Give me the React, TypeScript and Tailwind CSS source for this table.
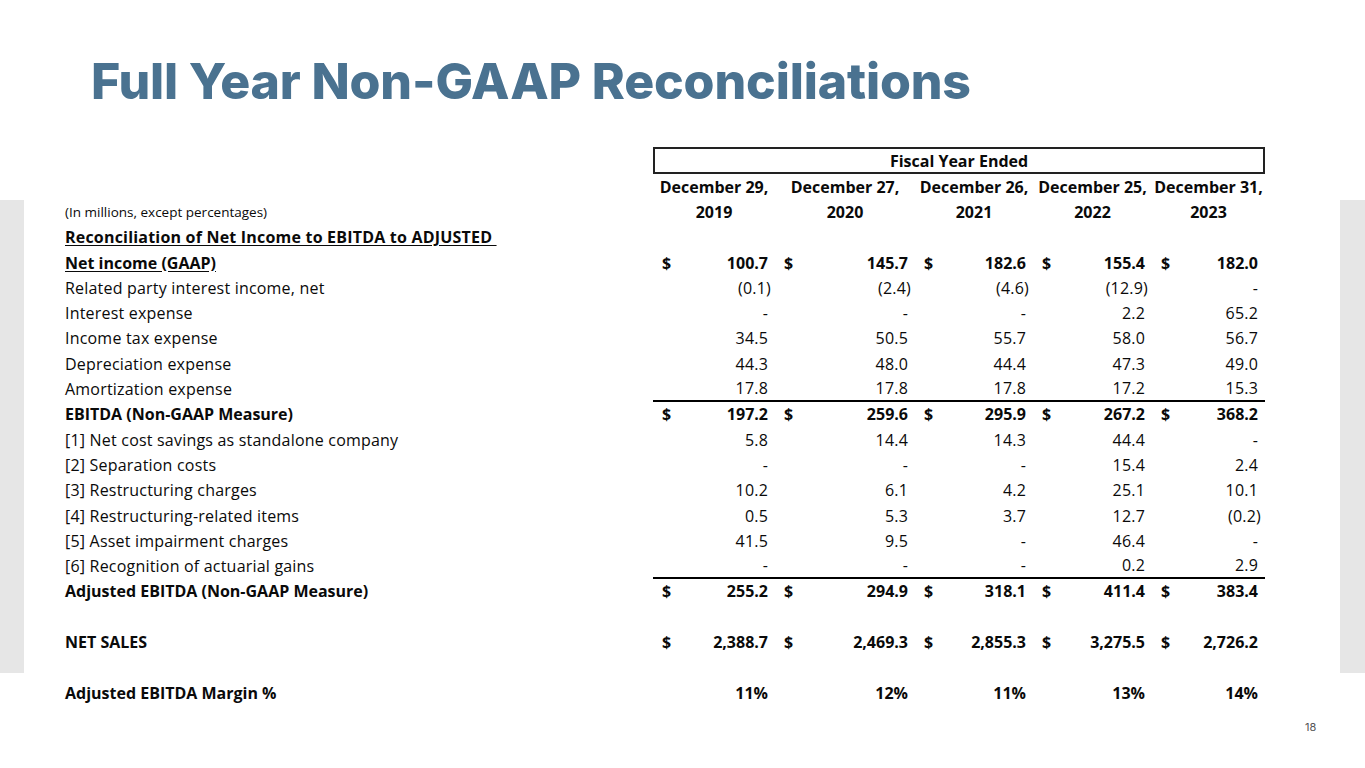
import React from "react";

type Row = {
  label?: string;
  vals?: string[];
  bold?: boolean;
  underline?: boolean;
  dollar?: boolean;
  lineBelow?: boolean;
  spacer?: boolean;
};

const cols = [
  { top: "December 29,", year: "2019" },
  { top: "December 27,", year: "2020" },
  { top: "December 26,", year: "2021" },
  { top: "December 25,", year: "2022" },
  { top: "December 31,", year: "2023" },
];

const rows: Row[] = [
  { label: "Net income (GAAP)", bold: true, underline: true, dollar: true, vals: ["100.7", "145.7", "182.6", "155.4", "182.0"] },
  { label: "Related party interest income, net", vals: ["(0.1)", "(2.4)", "(4.6)", "(12.9)", "-"] },
  { label: "Interest expense", vals: ["-", "-", "-", "2.2", "65.2"] },
  { label: "Income tax expense", vals: ["34.5", "50.5", "55.7", "58.0", "56.7"] },
  { label: "Depreciation expense", vals: ["44.3", "48.0", "44.4", "47.3", "49.0"] },
  { label: "Amortization expense", vals: ["17.8", "17.8", "17.8", "17.2", "15.3"], lineBelow: true },
  { label: "EBITDA (Non-GAAP Measure)", bold: true, dollar: true, vals: ["197.2", "259.6", "295.9", "267.2", "368.2"] },
  { label: "[1] Net cost savings as standalone company", vals: ["5.8", "14.4", "14.3", "44.4", "-"] },
  { label: "[2] Separation costs", vals: ["-", "-", "-", "15.4", "2.4"] },
  { label: "[3] Restructuring charges", vals: ["10.2", "6.1", "4.2", "25.1", "10.1"] },
  { label: "[4] Restructuring-related items", vals: ["0.5", "5.3", "3.7", "12.7", "(0.2)"] },
  { label: "[5] Asset impairment charges", vals: ["41.5", "9.5", "-", "46.4", "-"] },
  { label: "[6] Recognition of actuarial gains", vals: ["-", "-", "-", "0.2", "2.9"], lineBelow: true },
  { label: "Adjusted EBITDA (Non-GAAP Measure)", bold: true, dollar: true, vals: ["255.2", "294.9", "318.1", "411.4", "383.4"] },
  { spacer: true },
  { label: "NET SALES", bold: true, dollar: true, vals: ["2,388.7", "2,469.3", "2,855.3", "3,275.5", "2,726.2"] },
  { spacer: true },
  { label: "Adjusted EBITDA Margin %", bold: true, vals: ["11%", "12%", "11%", "13%", "14%"] },
];

const grid = "grid grid-cols-[588px_122px_140px_118px_119px_113px]";

function DataRow({ row }: { row: Row }) {
  if (row.spacer) return <div className="h-[25.3px]" />;
  return (
    <div className={`${grid} h-[25.3px] items-center ${row.bold ? "font-bold" : "tracking-[0.2px]"}`}>
      <div className={`whitespace-nowrap ${row.underline ? "underline underline-offset-2" : ""}`}>{row.label}</div>
      {row.vals!.map((v, i) => (
        <div
          key={i}
          className={`flex h-full items-center justify-between pl-[9px] pr-[7px] ${row.lineBelow ? "border-b-2 border-black" : ""}`}
        >
          <span>{row.dollar ? "$" : ""}</span>
          <span className={v.endsWith(")") ? "-mr-[3px]" : ""}>{v}</span>
        </div>
      ))}
    </div>
  );
}

export default function App() {
  return (
    <div className="w-[1365px] h-[768px] bg-white overflow-hidden flex flex-col">
      <h1 className="pl-[91px] pt-[56px] h-[147px] text-[50px] leading-[50px] font-extrabold tracking-[-0.15px] text-[#4a7290] font-['Inter',sans-serif]">
        Full Year Non-GAAP Reconciliations
      </h1>
      <div className="flex">
        <div className="w-[24px] h-[473px] mt-[53px] bg-[#e6e6e6]" />
        <div className="ml-[41px] w-[1200px] text-[16px] text-[#0a0a0a] font-['Open_Sans',sans-serif]">
          <div className={grid}>
            <div />
            <div className="col-span-5 h-[27px] border-2 border-[#222] flex items-center justify-center font-bold">
              Fiscal Year Ended
            </div>
          </div>
          <div className={`${grid} h-[25.3px] items-center font-bold`}>
            <div />
            {cols.map((c) => (
              <div key={c.top} className="text-center whitespace-nowrap">{c.top}</div>
            ))}
          </div>
          <div className={`${grid} h-[25.3px] items-center`}>
            <div className="text-[13.5px]">(In millions, except percentages)</div>
            {cols.map((c) => (
              <div key={c.year} className="text-center font-bold">{c.year}</div>
            ))}
          </div>
          <div className="h-[25.3px] flex items-center font-bold">
            <span className="underline underline-offset-2 whitespace-pre tracking-[0.2px]">Reconciliation of Net Income to EBITDA to ADJUSTED </span>
          </div>
          {rows.map((r, i) => (
            <DataRow key={i} row={r} />
          ))}
        </div>
        <div className="ml-auto w-[25px] h-[473px] mt-[53px] bg-[#e6e6e6]" />
      </div>
      <div className="pl-[1305px] pt-[14px] text-[11px] text-[#555] font-['Inter',sans-serif]">18</div>
    </div>
  );
}
